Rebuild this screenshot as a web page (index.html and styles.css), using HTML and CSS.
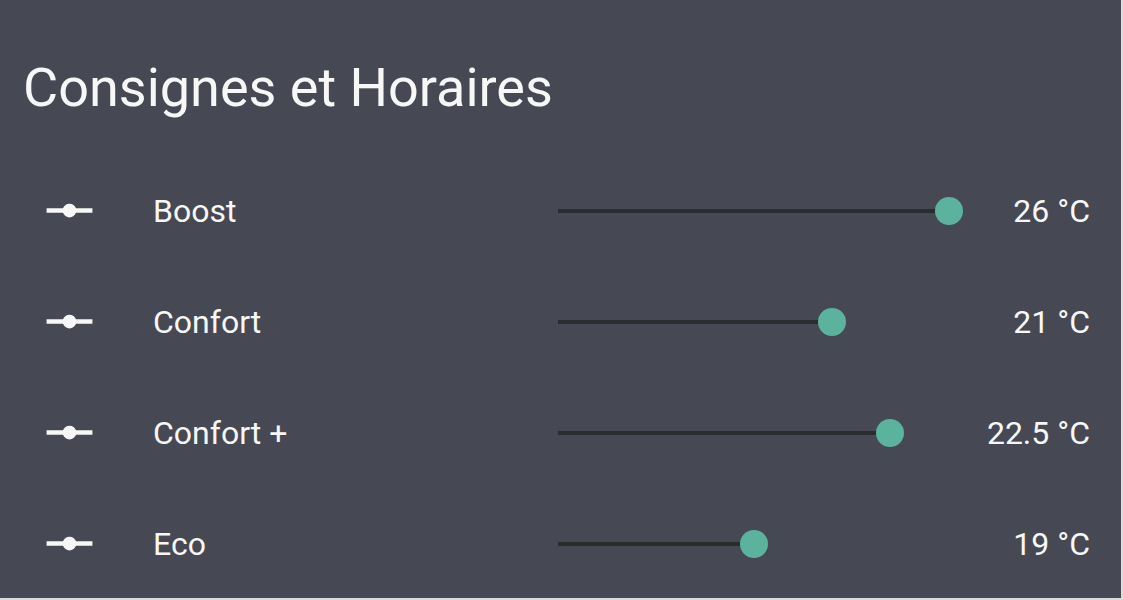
FILE: index.html
```html
<!DOCTYPE html>
<html lang="fr">
<head>
    <meta charset="UTF-8">
    <title>Consignes et Horaires</title>
    <link rel="stylesheet" href="styles.css">
</head>
<body>
    <div class="card">
        <h1 class="card-header">Consignes et Horaires</h1>
        <div class="rows">
            <div class="row">
                <svg class="icon" viewBox="0 0 24 24"><path d="M2 11H9.17C9.58 9.83 10.69 9 12 9S14.42 9.83 14.83 11H22V13H14.83C14.42 14.17 13.31 15 12 15S9.58 14.17 9.17 13H2V11Z"/></svg>
                <div class="label">Boost</div>
                <div class="slider"><div class="fill" style="width: 391px;"></div><div class="thumb"></div></div>
                <div class="value">26 °C</div>
            </div>
            <div class="row">
                <svg class="icon" viewBox="0 0 24 24"><path d="M2 11H9.17C9.58 9.83 10.69 9 12 9S14.42 9.83 14.83 11H22V13H14.83C14.42 14.17 13.31 15 12 15S9.58 14.17 9.17 13H2V11Z"/></svg>
                <div class="label">Confort</div>
                <div class="slider"><div class="fill" style="width: 274px;"></div><div class="thumb"></div></div>
                <div class="value">21 °C</div>
            </div>
            <div class="row">
                <svg class="icon" viewBox="0 0 24 24"><path d="M2 11H9.17C9.58 9.83 10.69 9 12 9S14.42 9.83 14.83 11H22V13H14.83C14.42 14.17 13.31 15 12 15S9.58 14.17 9.17 13H2V11Z"/></svg>
                <div class="label">Confort +</div>
                <div class="slider"><div class="fill" style="width: 332px;"></div><div class="thumb"></div></div>
                <div class="value">22.5 °C</div>
            </div>
            <div class="row">
                <svg class="icon" viewBox="0 0 24 24"><path d="M2 11H9.17C9.58 9.83 10.69 9 12 9S14.42 9.83 14.83 11H22V13H14.83C14.42 14.17 13.31 15 12 15S9.58 14.17 9.17 13H2V11Z"/></svg>
                <div class="label">Eco</div>
                <div class="slider"><div class="fill" style="width: 196px;"></div><div class="thumb"></div></div>
                <div class="value">19 °C</div>
            </div>
        </div>
    </div>
</body>
</html>
```

FILE: styles.css
```css
body {
    margin: 0;
    background: #dcdcdc;
    font-family: Roboto, "Noto Sans", sans-serif;
}
.card {
    width: 1121px;
    height: 598px;
    background: #464953;
    color: #f7f7f7;
    box-sizing: border-box;
    padding: 55px 31px 0 0;
}
.card-header {
    margin: 0 0 34px 23px;
    font-size: 54px;
    font-weight: 400;
    line-height: 66px;
}
.row {
    display: flex;
    align-items: center;
    height: 111px;
    padding-left: 42px;
}
.icon {
    width: 55px;
    height: 55px;
    fill: #f7f7f7;
    flex: none;
}
.label {
    width: 390px;
    margin-left: 56px;
    font-size: 32px;
}
.slider {
    position: relative;
    display: flex;
    align-items: center;
    width: 410px;
    margin-left: 15px;
    height: 30px;
}
.fill {
    height: 4px;
    background: #2b2c2f;
}
.thumb {
    width: 28px;
    height: 28px;
    border-radius: 50%;
    background: #5cb39d;
    margin-left: -14px;
}
.value {
    flex: 1;
    text-align: right;
    font-size: 32px;
}
```
